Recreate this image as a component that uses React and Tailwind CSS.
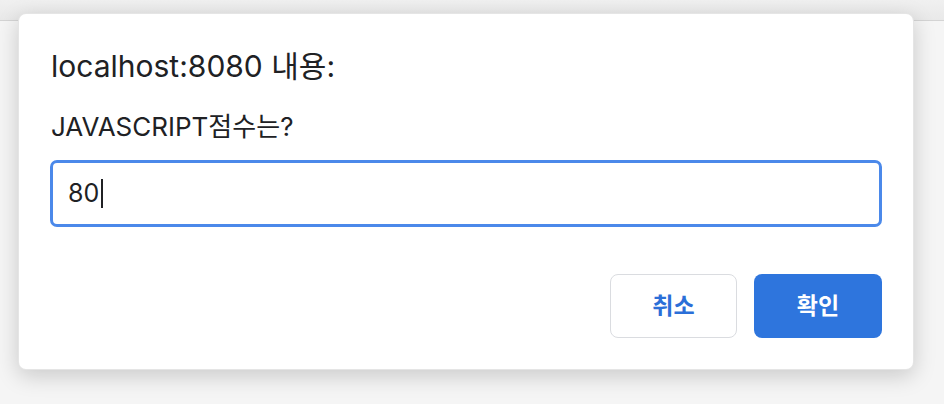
import React from "react";

const font = { fontFamily: 'Inter, "Noto Sans CJK KR", sans-serif' };

const App = () => {
  return (
    <div
      className="relative w-[944px] h-[404px] overflow-hidden bg-[#f5f5f5]"
      style={font}
    >
      {/* Browser chrome strip behind the dialog */}
      <div className="h-[21px] bg-gradient-to-b from-[#f0f0f0] to-[#e9e9e9] border-b border-[#d4d4d4]" />

      {/* Prompt dialog */}
      <div className="absolute left-[18px] top-[13px] w-[896px] h-[357px] bg-white rounded-[8px] border border-black/10 shadow-[0_6px_22px_rgba(0,0,0,0.18)] flex flex-col pt-[34px] px-[31px] pb-[31px]">
        <h1 className="text-[30px] leading-[36px] text-[#202124] pl-[1px]">
          localhost:8080 내용:
        </h1>
        <p className="mt-[27px] text-[26px] leading-[32px] text-[#202124] pl-[1px]">
          JAVASCRIPT점수는?
        </p>

        {/* Input with focus ring */}
        <div className="mt-[17px] h-[67px] rounded-[7px] border-[3px] border-[#4b89ea] flex items-center pl-[15px]">
          <span className="text-[25px] text-[#202124] leading-none">80</span>
          <span className="ml-[2px] w-[2px] h-[29px] bg-[#202124]" />
        </div>

        {/* Buttons */}
        <div className="mt-auto flex justify-end gap-[17px]">
          <button className="w-[127px] h-[64px] rounded-[8px] border border-[#dadce0] bg-white text-[23px] font-bold text-[#2b6fd8]">
            취소
          </button>
          <button className="w-[128px] h-[64px] rounded-[8px] bg-[#2e75dd] text-[23px] font-bold text-white">
            확인
          </button>
        </div>
      </div>
    </div>
  );
};

export default App;
